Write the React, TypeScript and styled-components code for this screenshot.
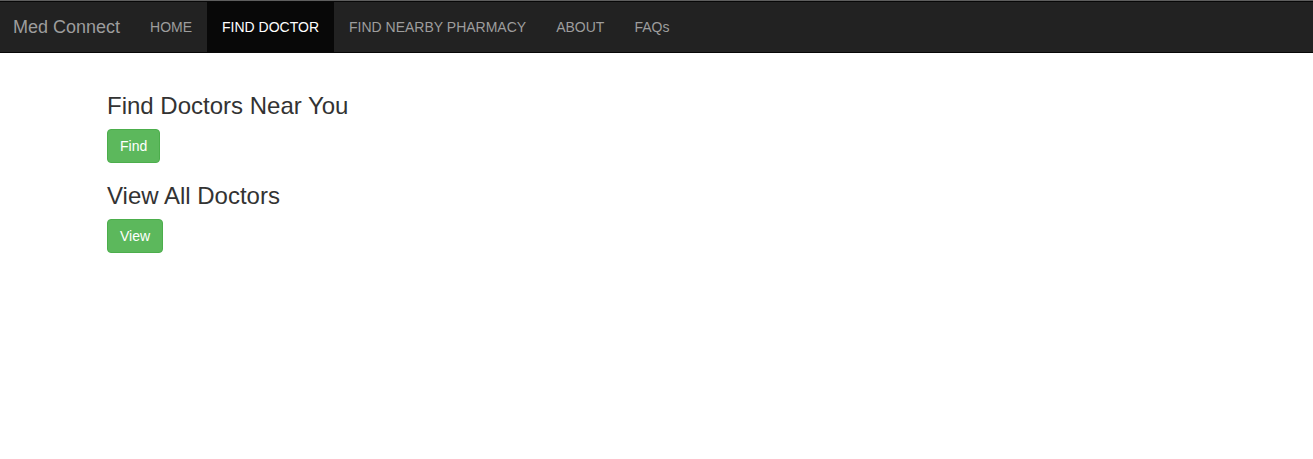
import React from "react";
import styled, { createGlobalStyle } from "styled-components";

const Global = createGlobalStyle`
  html, body { margin: 0; padding: 0; background: #fff; }
  body {
    font-family: "Liberation Sans", Arial, Helvetica, sans-serif;
    font-size: 14px;
    line-height: 1.42857143;
    color: #333;
  }
  * { box-sizing: border-box; }
`;

const Navbar = styled.nav`
  display: flex;
  align-items: flex-end;
  height: 53px;
  background: #222;
  border-top: 1px solid #5e5e5e;
  border-bottom: 1px solid #080808;
  box-shadow: inset 0 1px 0 #080808;
  margin-bottom: 20px;
`;

const Brand = styled.a`
  display: block;
  padding: 15px 15px 15px 13px;
  font-size: 18px;
  line-height: 20px;
  height: 50px;
  color: #9d9d9d;
  text-decoration: none;
`;

const NavList = styled.ul`
  display: flex;
  list-style: none;
  margin: 0;
  padding: 0;
`;

const NavLink = styled.a<{ $active?: boolean }>`
  display: block;
  padding: 15px;
  line-height: 20px;
  height: 50px;
  font-size: 14px;
  text-decoration: none;
  color: ${(p) => (p.$active ? "#fff" : "#9d9d9d")};
  background: ${(p) => (p.$active ? "#080808" : "transparent")};
`;

const Content = styled.main`
  display: flow-root;
  padding: 0 107px;
`;

const Heading = styled.h3`
  font-size: 24px;
  font-weight: 500;
  line-height: 26px;
  margin: 20px 0 10px;
  color: #333;
`;

const Button = styled.button`
  display: inline-block;
  font-family: inherit;
  font-size: 14px;
  line-height: 20px;
  padding: 6px 12px;
  color: #fff;
  background: #5cb85c;
  border: 1px solid #4cae4c;
  border-radius: 4px;
  cursor: pointer;
`;

const items = ["HOME", "FIND DOCTOR", "FIND NEARBY PHARMACY", "ABOUT", "FAQs"];

export default function App() {
  return (
    <>
      <Global />
      <Navbar>
        <Brand href="#">Med Connect</Brand>
        <NavList>
          {items.map((it) => (
            <li key={it}>
              <NavLink href="#" $active={it === "FIND DOCTOR"}>
                {it}
              </NavLink>
            </li>
          ))}
        </NavList>
      </Navbar>
      <Content>
        <Heading>Find Doctors Near You</Heading>
        <Button>Find</Button>
        <Heading>View All Doctors</Heading>
        <Button>View</Button>
      </Content>
    </>
  );
}
